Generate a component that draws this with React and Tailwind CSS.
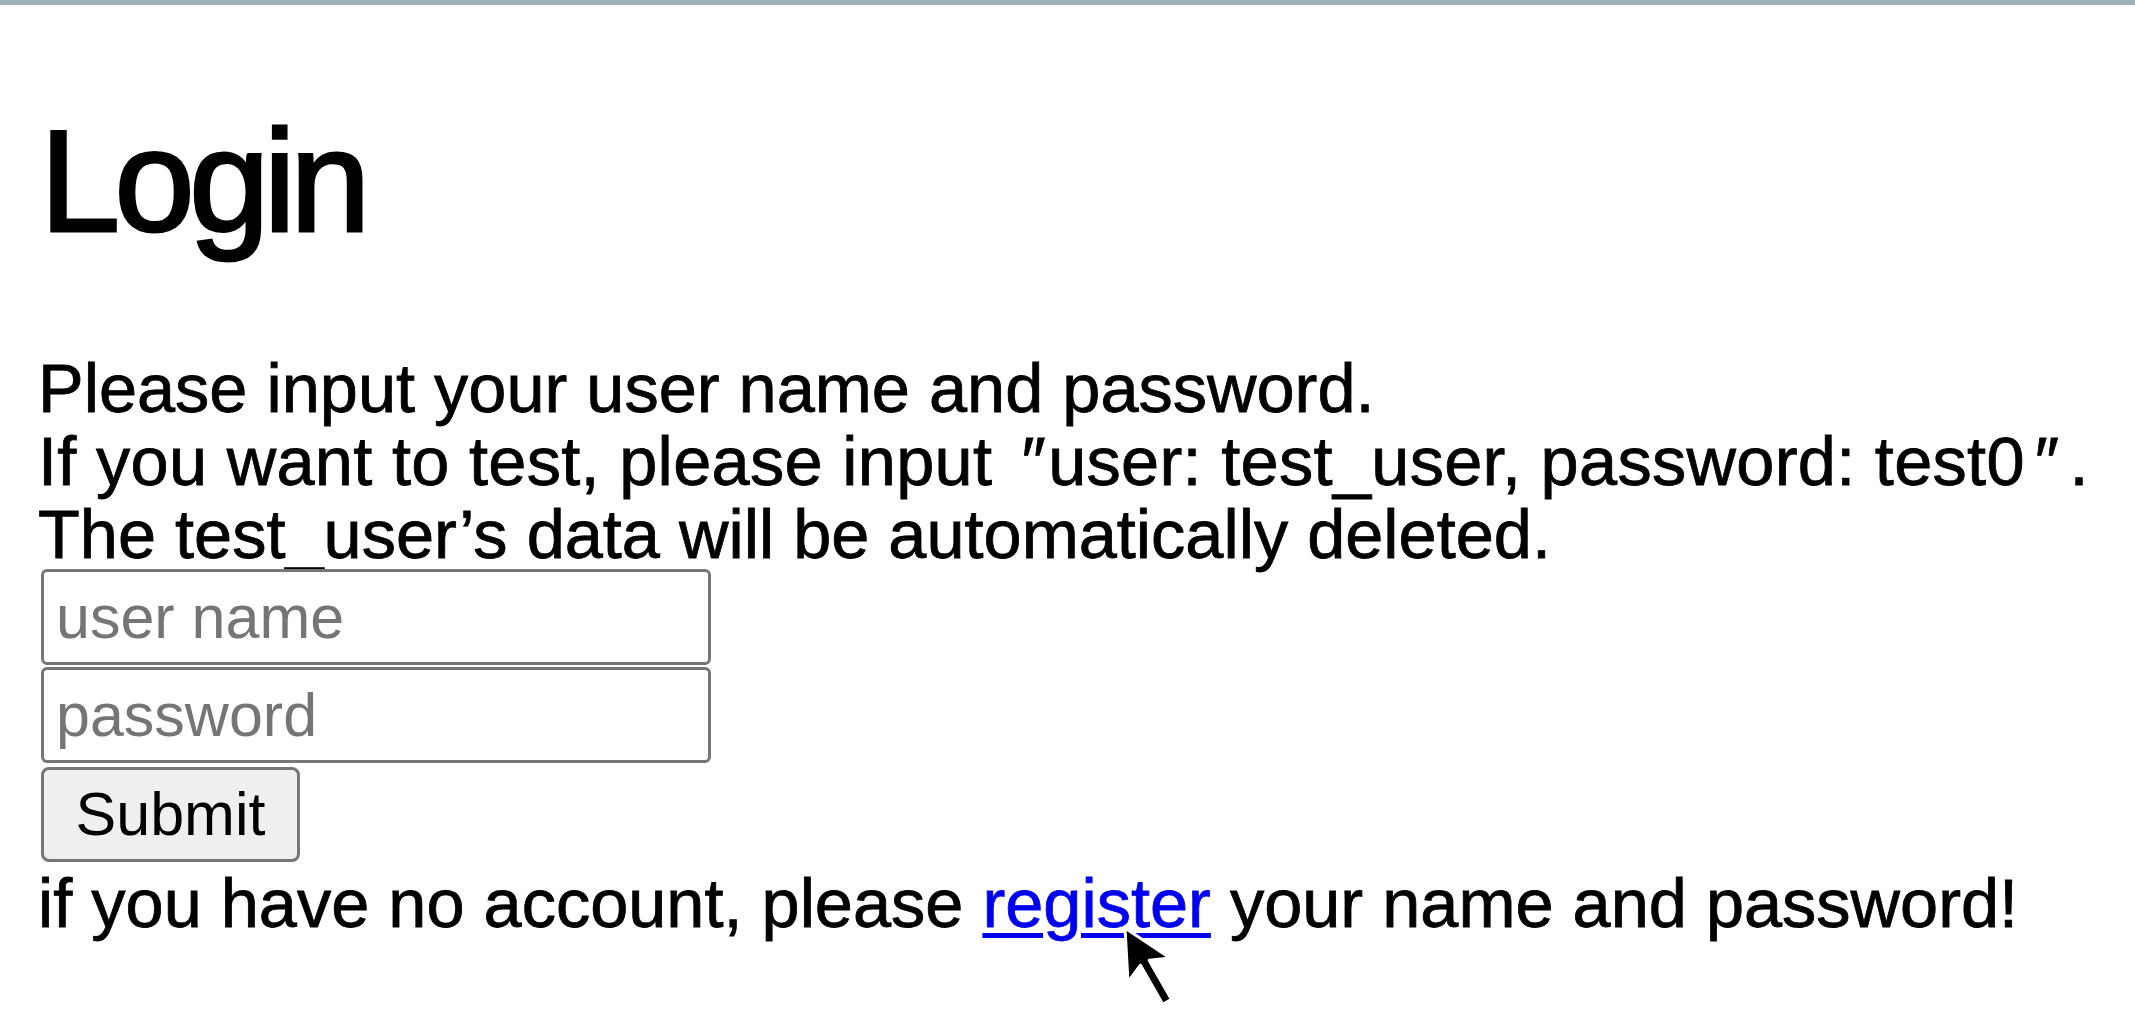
import React from "react";

function Cursor() {
  return (
    <svg
      className="absolute left-[1121px] top-[924px]"
      width="56"
      height="86"
      viewBox="-4 -4 56 86"
      aria-hidden="true"
    >
      <path
        d="M0 0 L3 54 L15.5 37.2 L37.8 76.3 L46.4 71.3 L24.1 32.2 L45 30 Z"
        fill="#000"
        stroke="#fff"
        strokeWidth="3"
        strokeLinejoin="round"
      />
    </svg>
  );
}

export default function App() {
  return (
    <div className="relative w-full h-[1026px] overflow-hidden bg-white text-black font-['Liberation_Sans',Arial,sans-serif]">
      <div className="h-[5px] w-full bg-[#9db2bb]" />
      <div className="flex flex-col items-start pl-[38px]">
        <h1 className="mt-[105px] ml-[2px] text-[144px] leading-none font-normal tracking-[-5.5px] [-webkit-text-stroke:3px_#000]">
          Login
        </h1>
        <div className="mt-[98px] text-[68.5px] leading-[73px] whitespace-nowrap [-webkit-text-stroke:0.8px_#000]">
          <div>Please input your user name and password.</div>
          <div className="tracking-[0.3px]">
            If you want to test, please input <span className="ml-[10px] mr-[2px]">″</span>user: test_user, password: test0<span className="ml-[10px] mr-[10px]">″</span>.
          </div>
          <div>The test_user’s data will be automatically deleted.</div>
        </div>
        <form className="flex flex-col items-start ml-[3px] -mt-[2px]">
          <input
            type="text"
            placeholder="user name"
            className="w-[670px] h-[96px] border-[3px] border-[#767676] rounded-[6px] bg-white pl-[12px] text-[61px] text-black placeholder:text-[#757575] outline-none font-['Liberation_Sans',Arial,sans-serif]"
          />
          <input
            type="password"
            placeholder="password"
            className="mt-[2px] w-[670px] h-[96px] border-[3px] border-[#767676] rounded-[6px] bg-white pl-[12px] text-[61px] text-black placeholder:text-[#757575] outline-none font-['Liberation_Sans',Arial,sans-serif]"
          />
          <button
            type="button"
            className="mt-[4px] w-[259px] h-[95px] border-[3px] border-[#767676] rounded-[8px] bg-[#efefef] text-[61px] leading-none text-black font-['Liberation_Sans',Arial,sans-serif]"
          >
            Submit
          </button>
        </form>
        <div className="mt-[5px] text-[68.5px] leading-[73px] whitespace-nowrap [-webkit-text-stroke:0.8px_#000]">
          if you have no account, please{" "}
          <a
            href="#"
            className="text-[#0000ee] underline decoration-[5px] underline-offset-[6px] [-webkit-text-stroke:0.8px_#0000ee]"
          >
            register
          </a>{" "}
          your name and password!
        </div>
      </div>
      <Cursor />
    </div>
  );
}
